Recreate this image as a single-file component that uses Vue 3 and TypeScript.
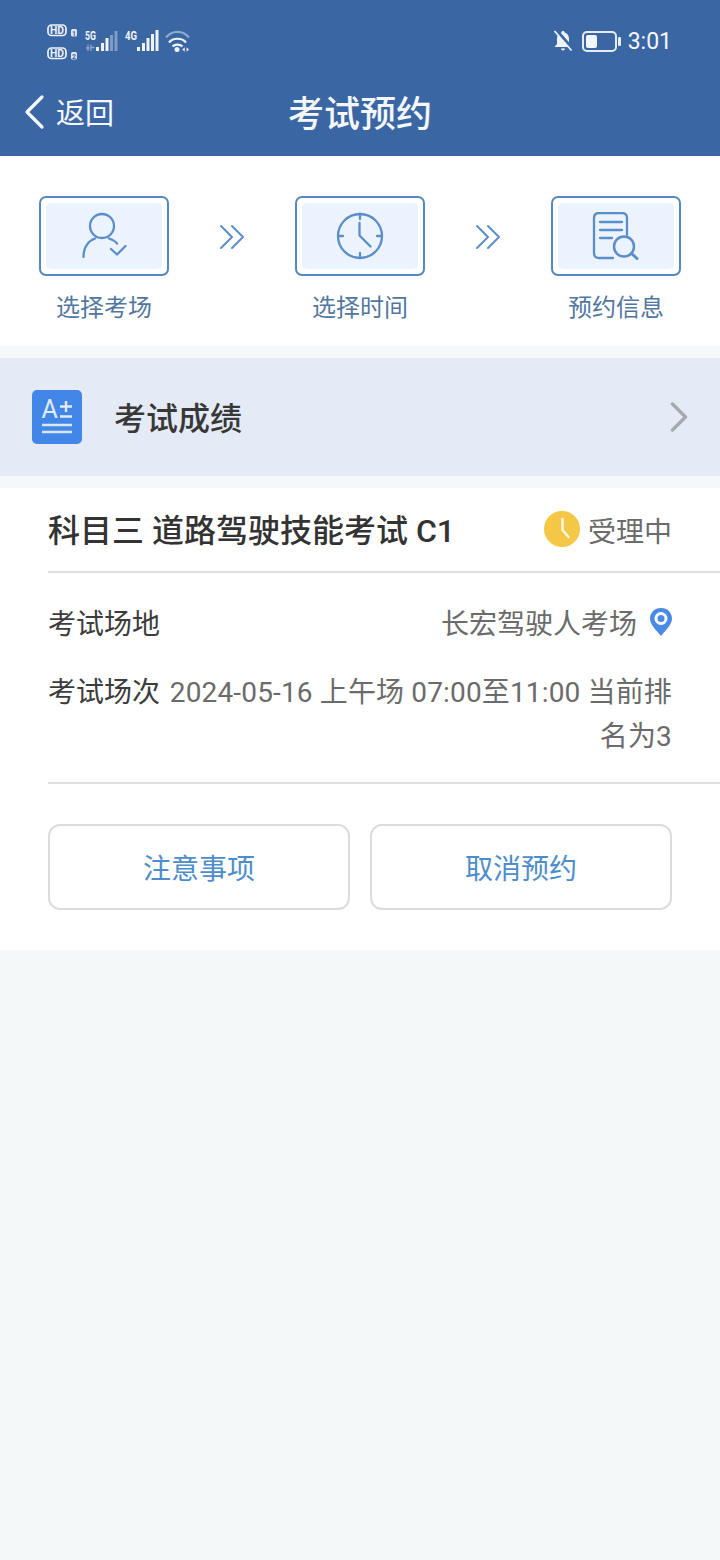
<script setup lang="ts">
const steps = [
  { label: '选择考场', icon: 'user' },
  { label: '选择时间', icon: 'clock' },
  { label: '预约信息', icon: 'doc' },
]
</script>

<template>
  <div class="page">
    <header class="header">
      <div class="status">
        <svg class="signals" width="146" height="38" viewBox="46 23 146 38">
          <rect x="48" y="25" width="18" height="10.500" rx="3.500" fill="none" stroke="#eef3f9" stroke-width="1.700" />
          <text x="57" y="34.200" text-anchor="middle" class="hd" textLength="14" lengthAdjust="spacingAndGlyphs">HD</text>
          <rect x="71" y="29" width="6" height="7.500" rx="1.500" fill="#dfe7f2" />
          <text x="74" y="35.500" text-anchor="middle" class="sim">1</text>
          <rect x="48" y="48" width="18" height="10.500" rx="3.500" fill="none" stroke="#eef3f9" stroke-width="1.700" />
          <text x="57" y="57.200" text-anchor="middle" class="hd" textLength="14" lengthAdjust="spacingAndGlyphs">HD</text>
          <rect x="71" y="52" width="6" height="7.500" rx="1.500" fill="#dfe7f2" />
          <text x="74" y="58.500" text-anchor="middle" class="sim">2</text>

          <text x="85" y="39.500" class="net" textLength="11" lengthAdjust="spacingAndGlyphs">5G</text>
          <path d="M86 48h3.500M88 44.500v6.500M91 44.500v6.500M91 47.500h3.500" stroke="#8ea8cd" stroke-width="1.300" fill="none" />
          <g fill="#eef3f9">
            <rect x="96" y="47" width="3" height="4" />
            <rect x="101" y="43" width="3" height="8" />
            <rect x="105.500" y="38" width="3" height="13" />
          </g>
          <g fill="#7e9cc6">
            <rect x="110" y="35" width="3" height="16" />
            <rect x="114.500" y="31" width="3" height="20" />
          </g>

          <text x="125" y="39.500" class="net" textLength="12" lengthAdjust="spacingAndGlyphs">4G</text>
          <g fill="#eef3f9">
            <rect x="137" y="47" width="3" height="4" />
            <rect x="142" y="43" width="3" height="8" />
            <rect x="146.500" y="38" width="3" height="13" />
            <rect x="151" y="34" width="3" height="17" />
            <rect x="155.500" y="30" width="3" height="21" />
          </g>

          <path d="M166 37.500C172 30 183 30 189 37.500" stroke="#8ea8cd" stroke-width="2.300" fill="none" />
          <path d="M169 42.500C173 37.500 182 37.500 186 42.500M172.500 46.500C175 44 180 44 182.500 46.500" stroke="#eef3f9" stroke-width="2.200" fill="none" />
          <circle cx="177" cy="49.500" r="2.500" fill="#eef3f9" />
          <path d="M184.800 47.200v4.600l-2.600-2.300zM186.500 47.200v4.600l2.600-2.300z" fill="#dfe7f2" />
        </svg>
        <div class="status-right">
          <svg width="20" height="22" viewBox="0 0 20 22">
            <path d="M10 1c-1 0-1.500.600-1.600 1.400C5.800 3.200 4 5.400 4 8.500V14l-2.500 3h17L16 14V8.500c0-3.100-1.800-5.300-4.400-6.100C11.500 1.600 11 1 10 1z" fill="#eef3f9" />
            <path d="M8 18.500h4c0 1.200-1 2-2 2s-2-.800-2-2z" fill="#eef3f9" />
            <path d="M3 0l16.500 19" stroke="#3b66a4" stroke-width="3.500" />
            <path d="M1.500 1l17 19.500" stroke="#eef3f9" stroke-width="1.800" />
          </svg>
          <div class="battery">
            <div class="battery-body"><div class="battery-fill"></div></div>
            <div class="battery-cap"></div>
          </div>
          <span class="time">3:01</span>
        </div>
      </div>
      <div class="nav">
        <div class="back">
          <svg class="back-arrow" width="22" height="36" viewBox="0 0 22 36">
            <path d="M19 3L4 18l15 15" fill="none" stroke="#f4f7fb" stroke-width="3.200" stroke-linecap="round" stroke-linejoin="round" />
          </svg>
          <span>返回</span>
        </div>
        <h1 class="title">考试预约</h1>
      </div>
    </header>

    <section class="steps">
      <template v-for="(step, i) in steps" :key="step.label">
        <div class="step">
          <div class="step-box">
            <div class="step-inner">
              <svg v-if="step.icon === 'user'" width="48" height="48" viewBox="0 0 48 48" fill="none" stroke="#5b8dca" stroke-width="2.300" stroke-linecap="round" stroke-linejoin="round">
                <circle cx="22" cy="14" r="12" />
                <path d="M3.500 45C3.500 34.500 9 28.500 15 26.500M29 26.500c3 1 6 2.500 8 5" />
                <path d="M31 37l6 5.500 8.500-8.500" />
              </svg>
              <svg v-else-if="step.icon === 'clock'" width="48" height="48" viewBox="0 0 48 48" fill="none" stroke="#5b8dca" stroke-width="2.300" stroke-linecap="round" stroke-linejoin="round">
                <circle cx="24" cy="24" r="22" />
                <path d="M24 2v5M24 41v5M2 24h5M41 24h5" />
                <path d="M23.500 11v12.500L34.500 34.500" />
              </svg>
              <svg v-else width="48" height="48" viewBox="0 0 48 48" fill="none" stroke="#5b8dca" stroke-width="2.300" stroke-linecap="round" stroke-linejoin="round">
                <path d="M21 46H7c-3 0-5-2-5-5V6c0-3 2-5 5-5h23c3 0 5 2 5 5v17" />
                <path d="M8 10h22M8 18h22M8 26h12" />
                <circle cx="32" cy="34.500" r="10" stroke-width="2.500" />
                <path d="M39.500 41.500l5.500 5" stroke-width="3" />
              </svg>
            </div>
          </div>
          <span class="step-label">{{ step.label }}</span>
        </div>
        <svg v-if="i < steps.length - 1" class="chevrons" width="26" height="26" viewBox="0 0 26 26" fill="none" stroke="#5c8fca" stroke-width="2" stroke-linecap="round" stroke-linejoin="round">
          <path d="M2 2l11 11L2 24M13 2l11 11-11 11" />
        </svg>
      </template>
    </section>

    <section class="score">
      <div class="score-left">
        <svg width="50" height="54" viewBox="0 0 50 54">
          <rect width="50" height="54" rx="5" fill="#4287e8" />
          <text x="9.500" y="28" class="a-letter">A</text>
          <path d="M28 16.500h12M34 11v11M28 26.500h12" stroke="#e0ebfa" stroke-width="2.400" fill="none" />
          <path d="M10 35h30M10 42h30" stroke="#d8e7fb" stroke-width="2.600" fill="none" />
        </svg>
        <span class="score-text">考试成绩</span>
      </div>
      <svg width="18" height="30" viewBox="0 0 18 30">
        <path d="M2.500 2l13 13-13 13" fill="none" stroke="#a5a9af" stroke-width="3.400" stroke-linecap="round" stroke-linejoin="round" />
      </svg>
    </section>

    <section class="card">
      <div class="card-head">
        <h2 class="card-title">科目三 道路驾驶技能考试 C1</h2>
        <div class="state">
          <svg width="36" height="36" viewBox="0 0 36 36">
            <circle cx="18" cy="18" r="18" fill="#f4c846" />
            <path d="M18.500 8v11l6 7" fill="none" stroke="#fdf6dc" stroke-width="2.600" stroke-linecap="round" stroke-linejoin="round" />
          </svg>
          <span class="state-text">受理中</span>
        </div>
      </div>
      <div class="info">
        <div class="info-row place">
          <span class="info-key">考试场地</span>
          <div class="info-place">
            <span>长宏驾驶人考场</span>
            <svg class="pin" width="24" height="30" viewBox="0 0 24 30">
              <path d="M12 1C5.500 1 1 5.800 1 11.500 1 18 8 24 12 29c4-5 11-11 11-17.500C23 5.800 18.500 1 12 1z" fill="#4a8ae6" />
              <circle cx="12" cy="11.500" r="6.500" fill="#fff" />
              <circle cx="12" cy="11.500" r="3.500" fill="#4a8ae6" />
            </svg>
          </div>
        </div>
        <div class="info-row session">
          <span class="info-key">考试场次</span>
          <span class="info-value">2024-05-16 上午场 07:00至11:00 当前排名为3</span>
        </div>
      </div>
      <div class="actions">
        <button class="action" type="button">注意事项</button>
        <button class="action" type="button">取消预约</button>
      </div>
    </section>
  </div>
</template>

<style>
html, body { margin: 0; background: #f5f8f9; }
</style>

<style scoped>
.page {
  width: 720px;
  height: 1560px;
  background: #f5f8f9;
  font-family: "Roboto", "Noto Sans CJK SC", sans-serif;
  overflow: hidden;
}
.header { height: 156px; background: #3b66a4; color: #f4f7fb; }
.status {
  height: 80px;
  display: flex;
  justify-content: space-between;
  align-items: flex-start;
  padding: 0 48px 0 46px;
  box-sizing: border-box;
}
.signals { margin-top: 23px; }
.hd { font: 700 11px "Roboto", sans-serif; fill: #eef3f9; }
.sim { font: 700 7px "Roboto", sans-serif; fill: #3b66a4; }
.net { font: 700 12px "Roboto", sans-serif; fill: #eef3f9; }
.status-right { display: flex; align-items: center; height: 28px; margin-top: 27px; }
.battery { display: flex; align-items: center; margin-left: 9px; }
.battery-body {
  width: 27px;
  height: 13px;
  border: 2px solid #e6ecf5;
  border-radius: 5px;
  padding: 2px;
  box-sizing: content-box;
}
.battery-fill { width: 11px; height: 100%; background: #f2f5fa; border-radius: 2px; }
.battery-cap { width: 3px; height: 9px; background: #e6ecf5; margin-left: 1px; border-radius: 1px; }
.time { font: 400 23px/28px "Roboto", sans-serif; margin-left: 7px; padding-top: 2px; }
.nav { position: relative; height: 76px; display: flex; align-items: center; padding: 0 0 8px 23px; box-sizing: border-box; }
.back { display: flex; align-items: center; gap: 11px; font-size: 29px; line-height: 36px; }
.back-arrow { margin-bottom: 4px; }
.title {
  position: absolute;
  left: 0;
  right: 0;
  top: 13px;
  margin: 0;
  text-align: center;
  font-size: 36px;
  line-height: 44px;
  font-weight: 500;
}
.steps {
  height: 190px;
  background: #fff;
  display: flex;
  justify-content: space-between;
  align-items: flex-start;
  padding: 40px 39px 0;
  box-sizing: border-box;
}
.step { width: 130px; display: flex; flex-direction: column; align-items: center; }
.step-box {
  width: 130px;
  height: 80px;
  border: 2px solid #5587c4;
  border-radius: 7px;
  padding: 5px;
  box-sizing: border-box;
  background: #fff;
}
.step-inner {
  height: 100%;
  background: #eaf3fe;
  border-radius: 5px;
  display: flex;
  align-items: center;
  justify-content: center;
}
.step-label { margin-top: 15px; font-size: 24px; line-height: 34px; color: #52779f; }
.chevrons { margin-top: 28px; }
.score {
  margin-top: 12px;
  height: 118px;
  background: #e4ebf6;
  display: flex;
  align-items: center;
  justify-content: space-between;
  padding: 0 32px;
  box-sizing: border-box;
}
.score-left { display: flex; align-items: center; gap: 32px; }
.a-letter { font: 400 25px "Roboto", sans-serif; fill: #e0ebfa; }
.score-text { font-size: 32px; line-height: 40px; color: #383838; font-weight: 500; padding-top: 4px; }
.card { margin-top: 12px; height: 462px; background: #fff; padding-left: 48px; box-sizing: border-box; }
.card-head {
  height: 85px;
  display: flex;
  justify-content: space-between;
  align-items: center;
  padding-right: 48px;
  padding-bottom: 2px;
  border-bottom: 2px solid #e0e0e0;
  box-sizing: border-box;
}
.card-title { margin: 0; padding-top: 4px; font-size: 32px; line-height: 40px; font-weight: 500; color: #333; }
.state { display: flex; align-items: center; gap: 8px; font-size: 28px; color: #6b6b6b; }
.state-text { padding-top: 2px; }
.info { height: 211px; padding-right: 48px; border-bottom: 2px solid #e0e0e0; box-sizing: border-box; }
.info-row { display: flex; justify-content: space-between; font-size: 28px; line-height: 44px; }
.place { padding-top: 30px; align-items: center; }
.session { padding-top: 24px; }
.info-key { color: #3c3c3c; flex: none; white-space: nowrap; }
.info-place { display: flex; align-items: center; gap: 12px; color: #6b6b6b; }
.pin { margin: -6px -1px 0 0; }
.info-value { color: #6b6b6b; text-align: right; margin-left: 6px; letter-spacing: 0.15px; }
.actions { display: flex; gap: 20px; padding: 40px 48px 0 0; }
.action {
  flex: 1;
  height: 86px;
  background: #fff;
  border: 2px solid #dcdcdc;
  border-radius: 12px;
  font-family: inherit;
  font-size: 28px;
  color: #4d8dcc;
}
</style>
